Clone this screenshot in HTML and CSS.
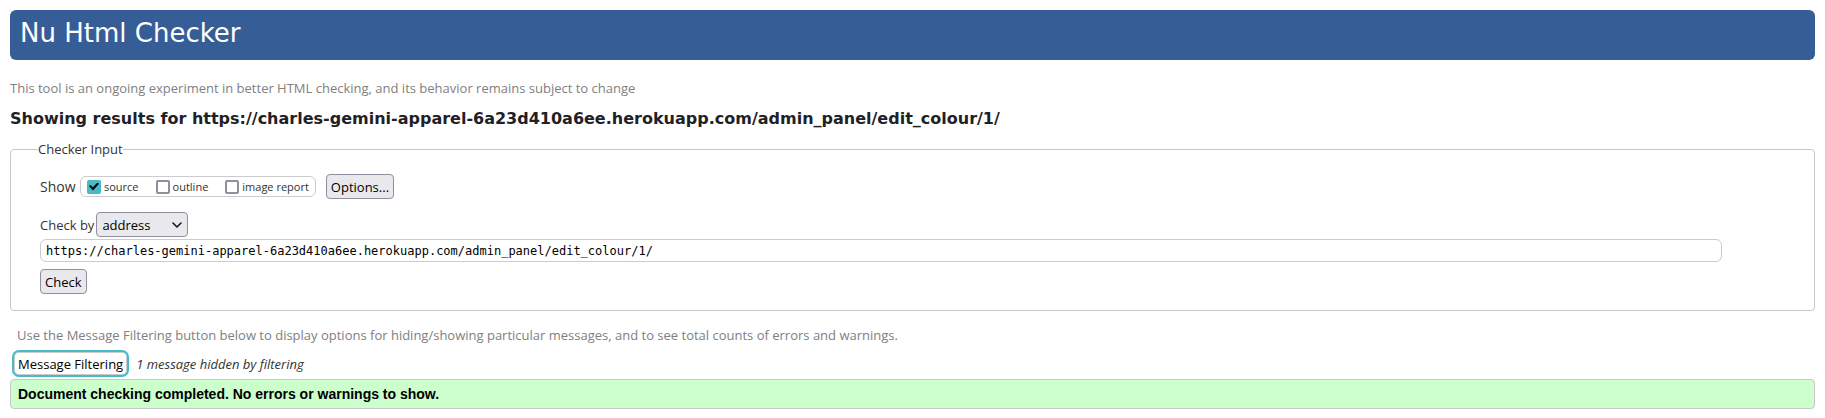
FILE: index.html
```html
<!DOCTYPE html>
<html lang="en">
<head>
<meta charset="utf-8">
<title>Nu Html Checker</title>
<link rel="stylesheet" href="styles.css">
</head>
<body class="page">
<h1 class="banner">Nu Html Checker</h1>
<main>
<p class="about">This tool is an ongoing experiment in better HTML checking, and its behavior remains subject to change</p>
<h2 class="heading">Showing results for https://charles-gemini-apparel-6a23d410a6ee.herokuapp.com/admin_panel/edit_colour/1/</h2>
<form>
<fieldset class="inputs">
<legend class="legend">Checker Input</legend>
<div class="show-row">
<span class="show-label">Show</span>
<div class="checks">
<label class="check"><input class="box" type="checkbox" checked>source</label>
<label class="check"><input class="box" type="checkbox">outline</label>
<label class="check"><input class="box" type="checkbox">image report</label>
</div>
<button class="button options" type="button">Options...</button>
</div>
<div class="method-row">
<label for="method">Check by</label>
<span class="select-wrap">
<select class="select" id="method"><option>address</option><option>file upload</option><option>text input</option></select>
<svg class="arrow" width="10" height="6" viewBox="0 0 10 6" aria-hidden="true"><path d="M1 1l4 4 4-4" fill="none" stroke="#15141a" stroke-width="1.6" stroke-linecap="round" stroke-linejoin="round"/></svg>
</span>
</div>
<input class="address" type="url" aria-label="Address" value="https://charles-gemini-apparel-6a23d410a6ee.herokuapp.com/admin_panel/edit_colour/1/">
<button class="button" type="button">Check</button>
</fieldset>
</form>
<p class="hint">Use the Message Filtering button below to display options for hiding/showing particular messages, and to see total counts of errors and warnings.</p>
<div class="filter-row">
<button class="filter" type="button">Message Filtering</button>
<em>1 message hidden by filtering</em>
</div>
<p class="success">Document checking completed. No errors or warnings to show.</p>
</main>
</body>
</html>
```
FILE: styles.css
```css
* {
  box-sizing: border-box;
}

.page {
  margin: 0;
  padding: 10px;
  background: #fff;
  color: #333;
  font: 13px/20px "Open Sans", sans-serif;
}

.banner {
  margin: 0;
  padding: 8px 10px 12px;
  border-radius: 6px;
  background: #365d95;
  color: #fff;
  font: 26px/30px "DejaVu Sans", sans-serif;
}

.about {
  margin: 18px 0 11px;
  color: #808080;
}

.heading {
  margin: 0;
  color: #1f2126;
  font: bold 16px/20px "DejaVu Sans", sans-serif;
}

.inputs {
  margin: 10px 0 0;
  padding: 15px 92px 16px 29px;
  border: 1px solid #c8c8c8;
  border-radius: 4px;
}

.legend {
  margin-left: -2px;
  padding: 0;
}

.show-row {
  display: flex;
  align-items: center;
}

.show-label {
  width: 40px;
  font-size: 14px;
}

.checks {
  display: flex;
  gap: 17px;
  padding: 0 6px;
  border: 1px solid #ccc;
  border-radius: 6px;
}

.check {
  display: flex;
  align-items: center;
  gap: 3px;
  font-size: 11px;
  line-height: 19px;
}

.box {
  appearance: none;
  width: 14px;
  height: 14px;
  margin: 0;
  border: 2px solid #8f8f9d;
  border-radius: 2px;
  background: #fff;
}

.box:checked {
  display: grid;
  place-items: center;
  border-color: #48b9c7;
  background: #48b9c7;
}

.box:checked::before {
  content: "";
  width: 10px;
  height: 8px;
  background: #000;
  clip-path: polygon(0 45%, 15% 30%, 38% 60%, 85% 0, 100% 15%, 40% 100%);
}

.button,
.select {
  height: 25px;
  border: 1px solid #8f8f9d;
  border-radius: 4px;
  background: #e9e9ed;
  color: #000;
  font: 13px/20px "Open Sans", sans-serif;
}

.button {
  padding: 0 4px;
}

.options {
  margin-left: 10px;
}

.method-row {
  display: flex;
  align-items: center;
  gap: 2px;
  margin-top: 13px;
}

.select-wrap {
  display: grid;
  align-items: center;
}

.select {
  grid-area: 1 / 1;
  appearance: none;
  width: 92px;
  padding: 0 5px;
}

.arrow {
  grid-area: 1 / 1;
  justify-self: end;
  margin-right: 6px;
  pointer-events: none;
}

.address {
  display: block;
  width: 100%;
  height: 23px;
  margin: 2px 0 7px;
  padding: 0 5px;
  border: 1px solid #ccc;
  border-radius: 6px;
  background: #fff;
  color: #000;
  font: 12px/20px "DejaVu Sans Mono", monospace;
}

.hint {
  margin: 14px 7px 5px;
  color: #808080;
}

.filter-row {
  display: flex;
  align-items: center;
  gap: 7px;
  padding-left: 2px;
}

.filter {
  height: 27px;
  padding: 0 4px;
  border: 2px solid #48b9c7;
  border-radius: 7px;
  background: #fff;
  box-shadow: inset 0 0 0 1px #ccc;
  color: #000;
  font: 13px/20px "Open Sans", sans-serif;
}

.success {
  margin: 2px 0 0;
  padding: 4px 7px;
  border: 1px solid #c8c8c8;
  border-radius: 4px;
  background: #cfc;
  color: #000;
  font: bold 14px/20px "Liberation Sans", sans-serif;
}
```
